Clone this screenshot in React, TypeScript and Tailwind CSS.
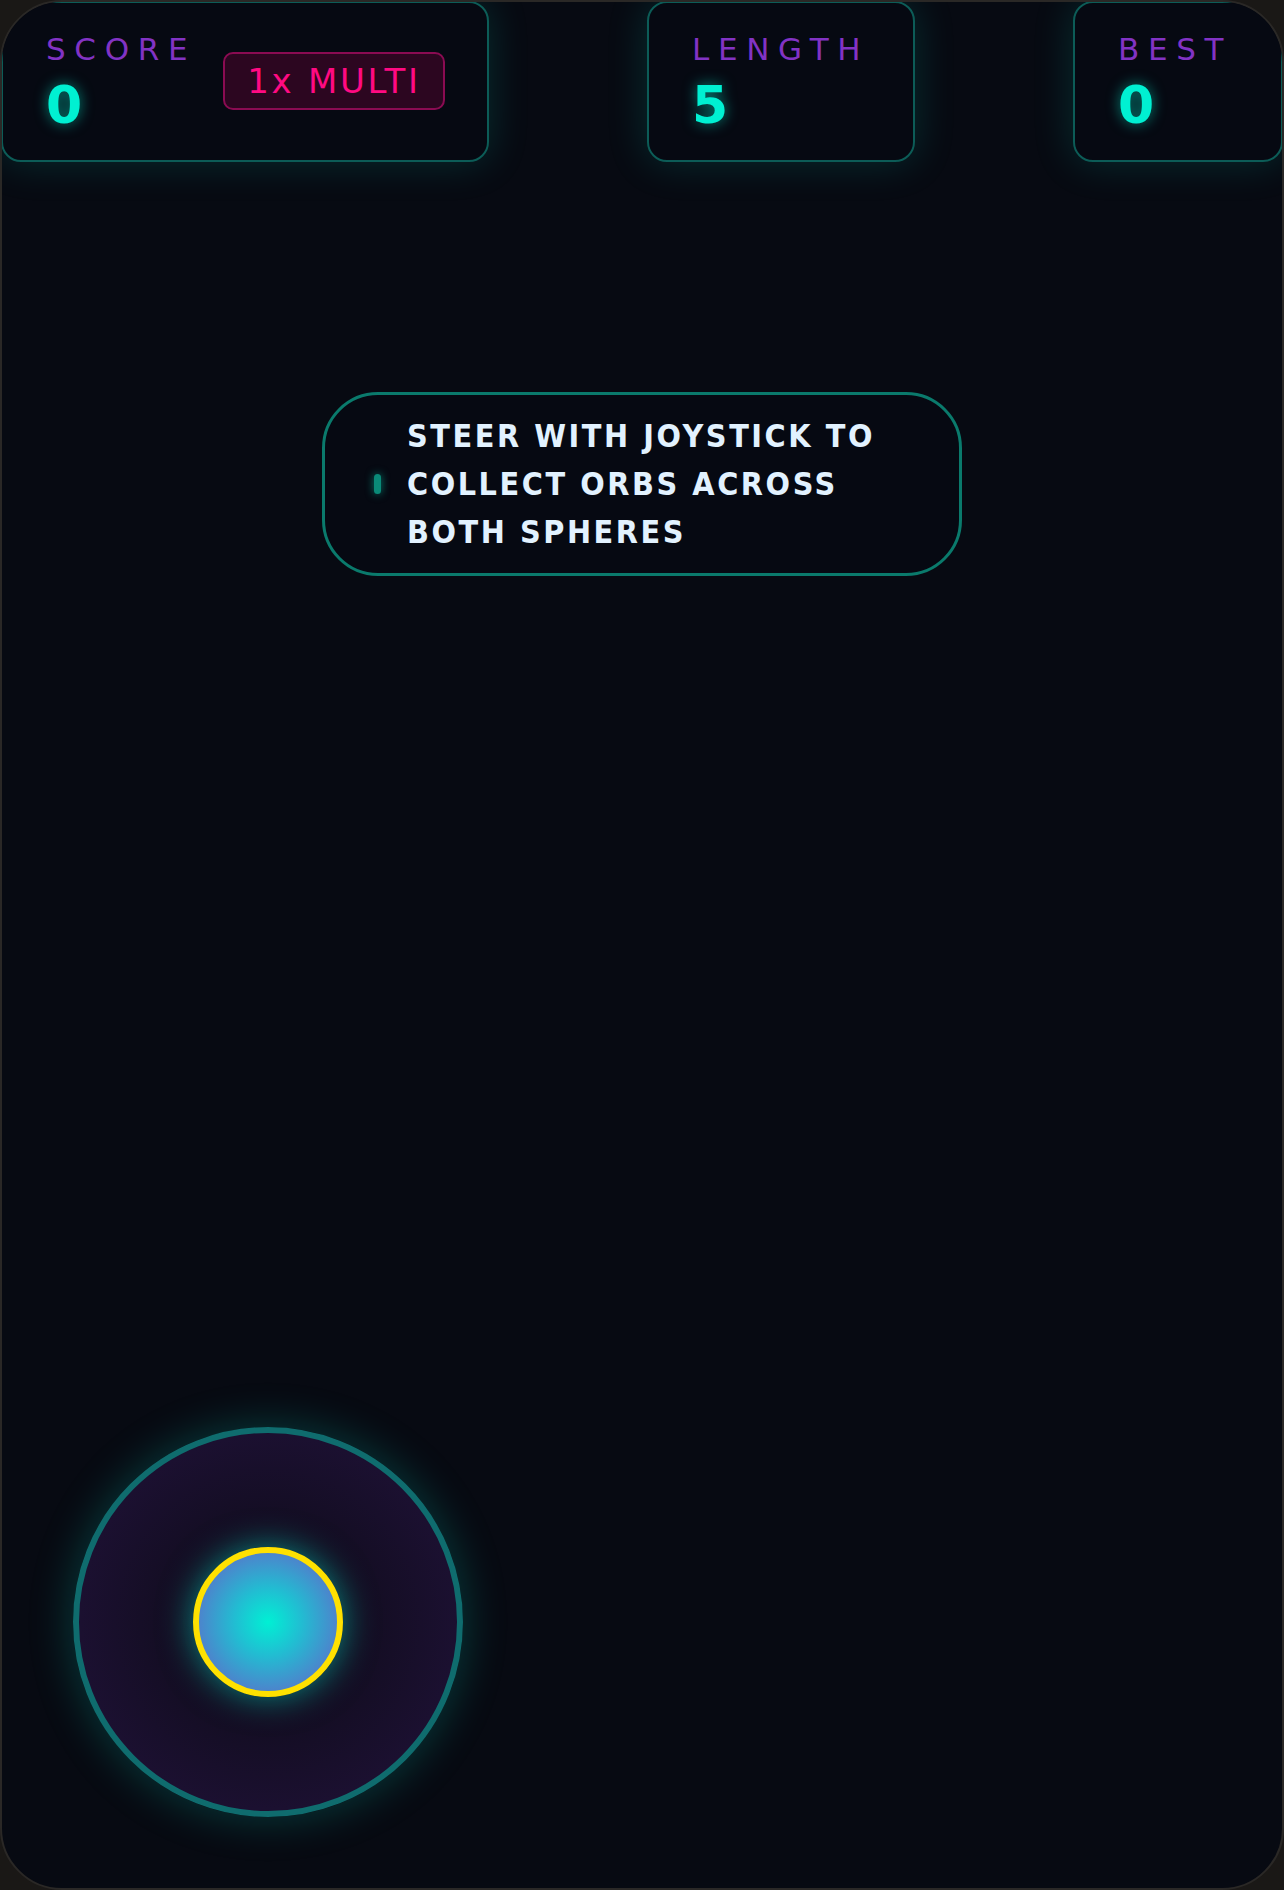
import React from "react";

function StatCard({ label, value, width, children }: { label: string; value: string; width: string; children?: React.ReactNode }) {
  return (
    <div
      className={`${width} h-[161px] shrink-0 rounded-[20px] border-2 border-[#0c5c57] bg-[#060912] shadow-[0_0_40px_rgba(0,210,190,0.18)] flex items-start justify-between pl-[43px] pr-[42px] pt-[31px]`}
    >
      <div className="flex flex-col">
        <div className="text-[31px] leading-none tracking-[0.28em] text-[#8233c4] font-['DejaVu_Sans',sans-serif]">
          {label}
        </div>
        <div className="mt-[14px] text-[52px] leading-none font-bold text-[#00f0d2] font-['DejaVu_Sans',sans-serif] [text-shadow:0_0_14px_rgba(0,240,210,0.55)]">
          {value}
        </div>
      </div>
      {children}
    </div>
  );
}

export default function App() {
  return (
    <div className="w-[1284px] h-[1890px] bg-[#1a1816]">
      <div className="relative w-full h-full rounded-[62px] border-2 border-[#2a2826] bg-[#070a12] overflow-hidden">
        <div className="flex justify-between items-start -mt-[1px] -mx-[1px]">
          <StatCard label="SCORE" value="0" width="w-[488px]">
            <div className="self-center -mt-[32px] w-[222px] h-[58px] rounded-[10px] border-2 border-[#8a0b52] bg-[#2c0620] flex items-center justify-center text-[34px] leading-none tracking-[0.08em] text-[#ff0a82] font-['DejaVu_Sans',sans-serif]">
              1x MULTI
            </div>
          </StatCard>
          <StatCard label="LENGTH" value="5" width="w-[268px]" />
          <StatCard label="BEST" value="0" width="w-[210px]" />
        </div>

        <div className="flex justify-center mt-[230px]">
          <div className="w-[640px] h-[184px] rounded-[56px] border-[3px] border-[#0a7a6c] bg-[#060912] flex items-center pl-[49px]">
            <div className="w-[7px] h-[20px] shrink-0 rounded-full bg-[#0a8a78] shadow-[0_0_8px_rgba(0,200,170,0.6)]"></div>
            <div className="ml-[26px] text-[32px] leading-[48px] font-bold tracking-[0.08em] text-[#e2f2ff] font-['DejaVu_Sans_Condensed',sans-serif]">
              STEER WITH JOYSTICK TO
              <br />
              COLLECT ORBS ACROSS
              <br />
              BOTH SPHERES
            </div>
          </div>
        </div>

        <div className="absolute left-[71px] bottom-[71px] w-[390px] h-[390px] rounded-full border-[6px] border-[#0f6c6e] bg-[radial-gradient(circle,#0e0a18_0%,#130d22_35%,#1b1030_70%,#1b1030_100%)] shadow-[0_0_44px_rgba(0,200,180,0.28)] flex items-center justify-center">
          <div className="w-[150px] h-[150px] rounded-full border-[6px] border-[#ffe100] bg-[radial-gradient(circle,#00f0d4_0%,#22bcd2_35%,#4b86cc_70%,#5a6ecc_100%)] shadow-[0_0_34px_rgba(0,240,210,0.55)]"></div>
        </div>
      </div>
    </div>
  );
}
